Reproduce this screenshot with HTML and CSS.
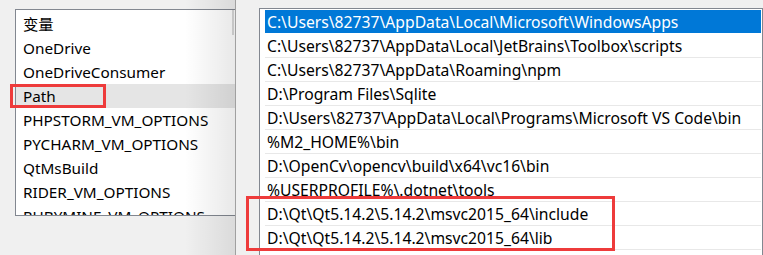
FILE: index.html
```html
<!DOCTYPE html>
<html lang="zh-CN">
<head>
<meta charset="UTF-8">
<title>环境变量</title>
<link rel="stylesheet" href="styles.css">
</head>
<body>
<div class="left_pane">
	<ul class="var_list">
		<li>变量</li>
		<li>OneDrive</li>
		<li>OneDriveConsumer</li>
		<li class="hover">Path</li>
		<li>PHPSTORM_VM_OPTIONS</li>
		<li>PYCHARM_VM_OPTIONS</li>
		<li>QtMsBuild</li>
		<li>RIDER_VM_OPTIONS</li>
		<li>RUBYMINE_VM_OPTIONS</li>
	</ul>
	<div class="thumb"></div>
	<div class="mark mark_path"></div>
</div>
<div class="right_pane">
	<ul class="path_list">
		<li class="sel">C:\Users\82737\AppData\Local\Microsoft\WindowsApps</li>
		<li>C:\Users\82737\AppData\Local\JetBrains\Toolbox\scripts</li>
		<li>C:\Users\82737\AppData\Roaming\npm</li>
		<li>D:\Program Files\Sqlite</li>
		<li>D:\Users\82737\AppData\Local\Programs\Microsoft VS Code\bin</li>
		<li>%M2_HOME%\bin</li>
		<li>D:\OpenCv\opencv\build\x64\vc16\bin</li>
		<li>%USERPROFILE%\.dotnet\tools</li>
		<li>D:\Qt\Qt5.14.2\5.14.2\msvc2015_64\include</li>
		<li>D:\Qt\Qt5.14.2\5.14.2\msvc2015_64\lib</li>
	</ul>
	<div class="mark mark_qt"></div>
</div>
</body>
</html>
```
FILE: styles.css
```css
html, body
{	margin:0;
	padding:0;
	height:255px;
	overflow:hidden;
	background-color:#f0f0f0;
	font-family:"Noto Sans", "Noto Sans CJK SC", sans-serif;
	font-size:15px;
	color:#000;
}
body
{	display:flex;
}
ul
{	list-style:none;
	margin:0;
	padding:0;
}
.left_pane
{	position:relative;
	width:236px;
	flex:none;
	border-right:1px solid #a0a0a0;
	padding:9px 0 0 15px;
	box-sizing:border-box;
	overflow:hidden;
}
.left_pane::after
{	content:"";
	position:absolute;
	top:0;
	right:0;
	bottom:0;
	width:50px;
	background:linear-gradient(to right, rgba(0,0,0,0), rgba(0,0,0,0.09));
}
.var_list
{	background-color:#fff;
	border:1px solid #828790;
	border-right:none;
	height:207px;
	overflow:hidden;
	padding-top:2px;
	box-sizing:border-box;
}
.var_list li
{	height:24px;
	line-height:25px;
	padding-left:7px;
	white-space:nowrap;
	font-size:15.3px;
}
.var_list li.hover
{	background-color:#e5e5e5;
}
.thumb
{	position:absolute;
	top:10px;
	left:232px;
	width:2px;
	height:25px;
	background-color:#d8d8d8;
}
.right_pane
{	position:relative;
	flex:1;
	padding:8px 0 0 23px;
	overflow:hidden;
}
.path_list
{	background-color:#fff;
	border:1px solid #828790;
	border-bottom:none;
	height:247px;
	overflow:hidden;
	padding:1px 1px 0 5px;
	box-sizing:border-box;
}
.path_list li
{	height:24px;
	line-height:24px;
	padding-left:2px;
	border-bottom:1px solid #e8e8e8;
	box-sizing:border-box;
	white-space:nowrap;
	font-size:15.7px;
}
.path_list li.sel
{	background-color:#0078d7;
	color:#fff;
	border-bottom-color:#fff;
}
.mark
{	position:absolute;
	border:3px solid #ee3b3b;
	box-sizing:border-box;
}
.mark_path
{	left:10px;
	top:84px;
	width:96px;
	height:24px;
}
.mark_qt
{	left:10px;
	top:196px;
	width:369px;
	height:55px;
}
```
